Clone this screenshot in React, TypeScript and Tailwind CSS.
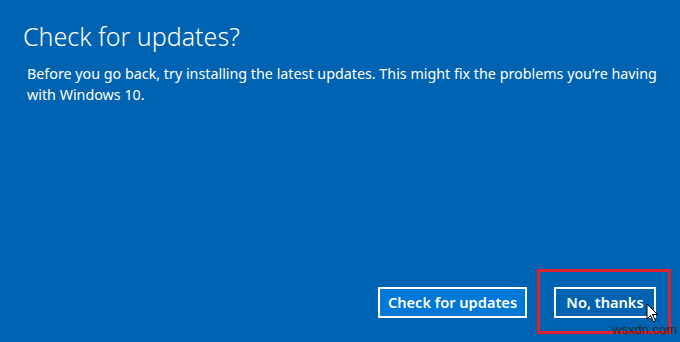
export default function App() {
  return (
    <div
      className="relative flex h-[342px] w-[680px] flex-col overflow-hidden bg-[#0063b1] text-white"
      style={{ fontFamily: '"Noto Sans", "Open Sans", sans-serif' }}
    >
      <div className="px-[23px] pt-[20px]">
        <h1 className="text-[25px] font-light leading-[32px]">Check for updates?</h1>
        <p className="mt-[11px] pl-[4px] text-[14.3px] leading-[21px]">
          <span className="block whitespace-nowrap">
            Before you go back, try installing the latest updates. This might fix the problems you’re having
          </span>
          <span className="block">with Windows 10.</span>
        </p>
      </div>

      <div className="flex-grow" />

      <div className="flex justify-end gap-[27px] pb-[24px] pr-[24px]">
        <button className="h-[31px] w-[149px] border-2 border-white bg-[#0078d7] text-[14.6px] font-semibold">
          Check for updates
        </button>
        <button className="h-[31px] w-[102px] border-2 border-white bg-[#0063b1] text-[14.6px] font-semibold">
          No, thanks
        </button>
      </div>

      {/* red highlight */}
      <div className="absolute left-[537px] top-[269px] h-[65px] w-[134px] border-[3px] border-[#e0202e]" />

      {/* cursor */}
      <svg className="absolute left-[646px] top-[303px]" width="14" height="20" viewBox="0 0 14 20">
        <path d="M1 1 L1 16 L4.5 12.5 L7.5 19 L9.5 18 L6.5 11.5 L11.5 11.5 Z" fill="white" stroke="black" strokeWidth="1" />
      </svg>

      <span
        className="absolute left-[612px] top-[322px] text-[13px] leading-[16px] text-[#2a2a2a]"
        style={{ fontFamily: '"Liberation Sans", sans-serif' }}
      >
        wsxdn.com
      </span>
    </div>
  )
}
